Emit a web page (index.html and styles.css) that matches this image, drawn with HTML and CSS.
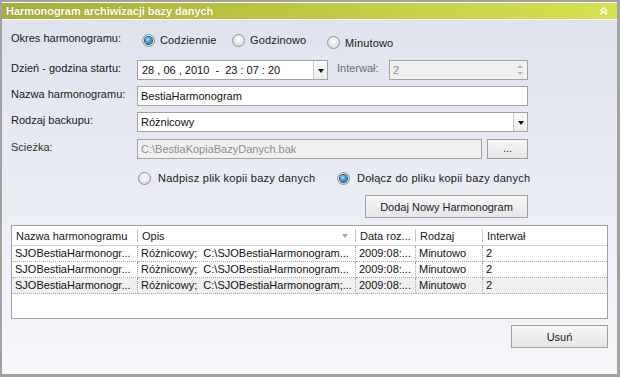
FILE: index.html
```html
<!DOCTYPE html>
<html lang="pl">
<head>
<meta charset="utf-8">
<title>Harmonogram archiwizacji bazy danych</title>
<link rel="stylesheet" href="styles.css">
</head>
<body>
<div class="window">
  <div class="titlebar">
    <span class="title">Harmonogram archiwizacji bazy danych</span>
    <svg class="collapse" width="9" height="8" viewBox="0 0 9 8"><path d="M1 4.2 L4.5 1 L8 4.2 M1 7.6 L4.5 4.4 L8 7.6" fill="none" stroke="#fff" stroke-width="1.5"/></svg>
  </div>
  <div class="content">
    <div class="row row-okres">
      <span class="lbl">Okres harmonogramu:</span>
      <div class="radio-group okres-group">
        <div class="radio-item w90"><span class="radio checked"></span>Codziennie</div>
        <div class="radio-item w95"><span class="radio"></span>Godzinowo</div>
        <div class="radio-item low"><span class="radio"></span>Minutowo</div>
      </div>
    </div>

    <div class="row row-date">
      <span class="lbl">Dzień - godzina startu:</span>
      <div class="box combo date">
        <span class="box-text date-text">28 , 06 , 2010  -  23 : 07 : 20</span>
        <span class="drop"><span class="arrow"></span></span>
      </div>
      <span class="lbl-inline disabled">Interwał:</span>
      <div class="box spin">
        <span class="box-text dis-text">2</span>
        <span class="spin-btns"><span class="up"></span><span class="down"></span></span>
      </div>
    </div>

    <div class="row row-name">
      <span class="lbl">Nazwa harmonogramu:</span>
      <div class="box wide"><span class="box-text">BestiaHarmonogram</span></div>
    </div>

    <div class="row row-type">
      <span class="lbl">Rodzaj backupu:</span>
      <div class="box combo wide">
        <span class="box-text">Różnicowy</span>
        <span class="drop"><span class="arrow"></span></span>
      </div>
    </div>

    <div class="row row-path">
      <span class="lbl lbl-path">Scieżka:</span>
      <div class="box path"><span class="box-text dis-text">C:\BestiaKopiaBazyDanych.bak</span></div>
      <div class="btn dots">...</div>
    </div>

    <div class="row row-mode">
      <span class="lbl"></span>
      <div class="radio-group mode-group">
        <div class="radio-item w199"><span class="radio"></span>Nadpisz plik kopii bazy danych</div>
        <div class="radio-item"><span class="radio checked"></span>Dołącz do pliku kopii bazy danych</div>
      </div>
    </div>

    <div class="row row-add">
      <div class="btn add">Dodaj Nowy Harmonogram</div>
    </div>

    <div class="grid">
      <div class="grid-head">
        <div class="hcell">Nazwa harmonogramu</div>
        <div class="hcell sorted">Opis<span class="sort"></span></div>
        <div class="hcell">Data roz...</div>
        <div class="hcell">Rodzaj</div>
        <div class="hcell last">Interwał</div>
      </div>
      <div class="grid-row">
        <div class="cell">SJOBestiaHarmonogr...</div>
        <div class="cell">Różnicowy;  C:\SJOBestiaHarmonogram...</div>
        <div class="cell">2009:08:...</div>
        <div class="cell">Minutowo</div>
        <div class="cell last">2</div>
      </div>
      <div class="grid-row">
        <div class="cell">SJOBestiaHarmonogr...</div>
        <div class="cell">Różnicowy;  C:\SJOBestiaHarmonogram...</div>
        <div class="cell">2009:08:...</div>
        <div class="cell">Minutowo</div>
        <div class="cell last">2</div>
      </div>
      <div class="grid-row alt">
        <div class="cell">SJOBestiaHarmonogr...</div>
        <div class="cell">Różnicowy;  C:\SJOBestiaHarmonogram;...</div>
        <div class="cell">2009:08:...</div>
        <div class="cell">Minutowo</div>
        <div class="cell last">2</div>
      </div>
    </div>

    <div class="row row-del">
      <div class="btn del">Usuń</div>
    </div>
  </div>
</div>
</body>
</html>
```

FILE: styles.css
```css
* { box-sizing: border-box; }
html, body { margin: 0; padding: 0; }
body {
  width: 620px;
  height: 377px;
  overflow: hidden;
  font-family: "Liberation Sans", Arial, sans-serif;
  font-size: 11px;
  color: #1a1a1a;
  background: #a0a0a0;
}
.window {
  width: 620px;
  height: 377px;
  border-style: solid;
  border-color: #a2a2a2;
  border-width: 2px 3px 3px 2px;
  display: flex;
  flex-direction: column;
  background: #ffffff;
}
.titlebar {
  height: 17px;
  margin-top: 1px;
  border-bottom: 1px solid #ffffff;
  background: linear-gradient(to right, #a6af38, #c0c843 50%, #d7e14f);
  display: flex;
  align-items: center;
  justify-content: space-between;
  padding: 0 9px 0 4px;
}
.title {
  color: #ffffff;
  font-weight: bold;
  font-size: 11px;
  letter-spacing: -0.05px;
  text-shadow: 0 0 1px rgba(60, 60, 0, 0.35);
}
.collapse { display: block; }

.content {
  flex: 1;
  background: linear-gradient(#dfe3ee, #f6f7fa);
  padding: 10px 9px 0 9px;
  display: flex;
  flex-direction: column;
}
.row {
  display: flex;
  align-items: center;
  height: 20px;
  flex-shrink: 0;
}
.lbl {
  width: 126px;
  flex-shrink: 0;
  align-self: flex-start;
  line-height: 14px;
  padding-top: 1px;
  color: #1a1a1a;
}
.lbl-path { color: #333333; }

.row-okres { margin-top: 0; }
.row-date { margin-top: 10px; }
.row-name { margin-top: 6px; }
.row-type { margin-top: 6px; }
.row-path { margin-top: 7px; }
.row-mode { margin-top: 9px; }
.row-add { margin-top: 7px; height: 23px; justify-content: flex-end; padding-right: 80px; }
.row-del { margin-top: 6px; height: 23px; justify-content: flex-end; }

/* radios */
.radio-group { display: flex; align-items: center; height: 20px; }
.okres-group { padding-left: 5px; }
.okres-group .radio-item { letter-spacing: 0.15px; }
.mode-group { padding-left: 1px; }
.radio-item {
  display: flex;
  align-items: center;
  gap: 5px;
  white-space: nowrap;
  color: #1a1a1a;
}
.w90 { width: 90px; }
.w95 { width: 95px; }
.w199 { width: 199px; }
.mode-group .radio-item { gap: 7px; letter-spacing: 0.25px; }
.low { margin-top: 5px; }
.radio {
  width: 13px;
  height: 13px;
  border-radius: 50%;
  border: 1px solid #929292;
  background: radial-gradient(circle at 50% 40%, #fdfdfd 0%, #e6e6e6 55%, #cfcfcf 100%);
  display: flex;
  align-items: center;
  justify-content: center;
  flex-shrink: 0;
}
.radio.checked::before {
  content: "";
  width: 7px;
  height: 7px;
  border-radius: 50%;
  background: radial-gradient(circle at 40% 35%, #a8e6ff 0%, #3a9ae0 45%, #0d4f8e 100%);
  box-shadow: 0 0 0 1px #1d4f7e;
}

/* boxes */
.box {
  height: 20px;
  border: 1px solid #a3a3a3;
  background: #ffffff;
  display: flex;
  align-items: center;
  flex-shrink: 0;
}
.box-text {
  flex: 1;
  padding-left: 3px;
  white-space: pre;
  overflow: hidden;
  color: #111111;
  line-height: 16px;
}
.dis-text { color: #8d8d8d; }
.date { width: 191px; }
.date-text { padding-left: 4px; }
.wide { width: 391px; }
.path { width: 345px; background: #f0f0f0; }
.spin { width: 139px; background: #f0f0f0; }
.lbl-inline { margin-left: 9px; width: 52px; line-height: 14px; align-self: flex-start; padding-top: 1px; }
.disabled { color: #6f6f6f; }

.drop {
  width: 14px;
  height: 18px;
  border-left: 1px solid #c9c9c9;
  background: linear-gradient(#fbfbfb, #ececec);
  display: flex;
  align-items: center;
  justify-content: center;
}
.arrow {
  width: 0;
  height: 0;
  border-left: 3px solid transparent;
  border-right: 3px solid transparent;
  border-top: 4px solid #111111;
  margin-top: 1px;
}
.spin-btns {
  width: 14px;
  height: 18px;
  display: flex;
  flex-direction: column;
  align-items: center;
  justify-content: center;
  gap: 4px;
}
.up {
  width: 0; height: 0;
  border-left: 3px solid transparent;
  border-right: 3px solid transparent;
  border-bottom: 3px solid #b8b8b8;
}
.down {
  width: 0; height: 0;
  border-left: 3px solid transparent;
  border-right: 3px solid transparent;
  border-top: 3px solid #b8b8b8;
}

/* buttons */
.btn {
  border: 1px solid #a0a0a0;
  background: linear-gradient(#f7f7f7, #e6e6e6);
  display: flex;
  align-items: center;
  justify-content: center;
  color: #1c1a2e;
  flex-shrink: 0;
}
.dots { width: 41px; height: 20px; margin-left: 5px; color: #333; padding-bottom: 3px; }
.add { width: 163px; height: 23px; }
.del { width: 97px; height: 23px; }

/* grid */
.grid {
  margin-top: 7px;
  height: 94px;
  border: 1px solid #a0a0a0;
  background: #ffffff;
  flex-shrink: 0;
}
.grid-head, .grid-row {
  display: grid;
  grid-template-columns: 126px 218px 60px 67px 1fr;
}
.grid-head {
  height: 20px;
  border-bottom: 1px solid #d5d5d5;
  background: #ffffff;
}
.hcell {
  display: flex;
  align-items: center;
  padding-left: 4px;
  white-space: nowrap;
  overflow: hidden;
  color: #1a1a1a;
  background: linear-gradient(#c8c8c8, #c8c8c8) no-repeat right center / 1px 13px;
}
.hcell.last { background: none; }
.sorted { justify-content: space-between; padding-right: 8px; }
.sort {
  width: 0; height: 0;
  border-left: 3px solid transparent;
  border-right: 3px solid transparent;
  border-top: 4px solid #a6a6a6;
}
.grid-row { height: 16px; }
.grid-row.alt { background: #f0f0f0; }
.cell {
  padding-left: 3px;
  line-height: 15px;
  white-space: pre;
  overflow: hidden;
  border-right: 1px dotted #a8a8a8;
  border-bottom: 1px dotted #a8a8a8;
  color: #111111;
}
.cell.last { border-right: none; }
```
